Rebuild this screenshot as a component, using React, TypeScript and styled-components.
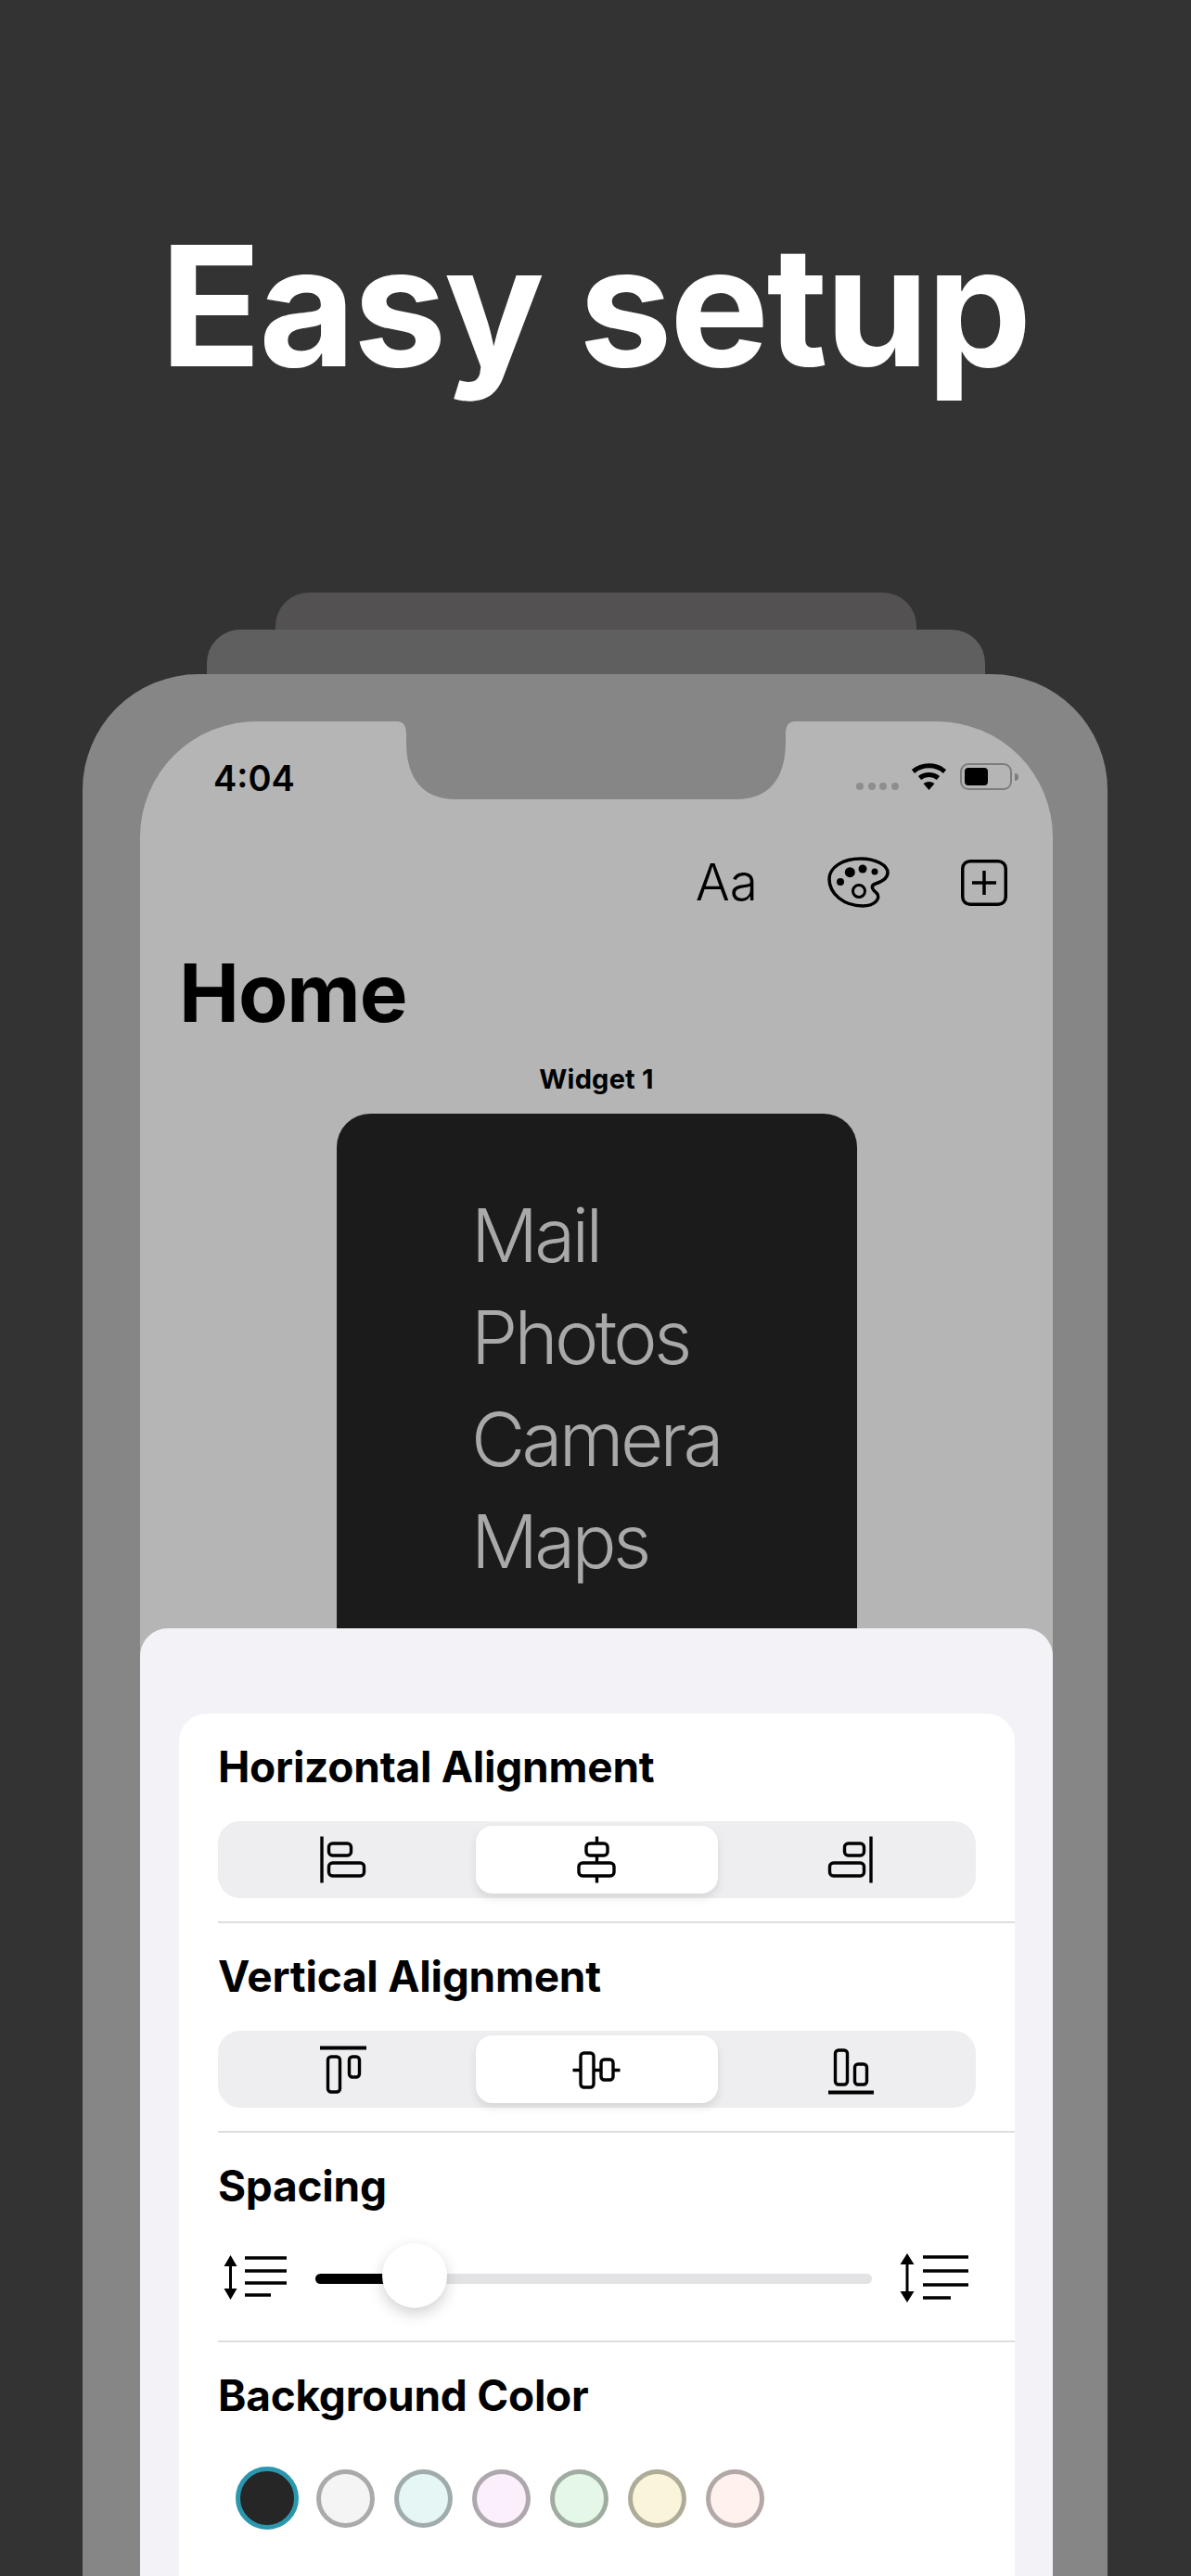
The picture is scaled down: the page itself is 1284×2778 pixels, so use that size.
import styled, { createGlobalStyle } from 'styled-components';

const GlobalStyle = createGlobalStyle`
  html, body {
    margin: 0;
    background: #333333;
  }
  * {
    box-sizing: border-box;
  }
`;

const hIcons = [
  <>
    <path d="M6 4.5V54.5" />
    <rect x="13.5" y="12" width="24" height="13" rx="4" />
    <rect x="13.5" y="33" width="38" height="14" rx="4" />
  </>,
  <>
    <path d="M30.5 4.5V12M30.5 25V33M30.5 47V54.5" />
    <rect x="19" y="12" width="23" height="13" rx="4" />
    <rect x="11" y="33" width="38" height="14" rx="4" />
  </>,
  <>
    <path d="M53 4.5V54.5" />
    <rect x="24.5" y="12" width="21" height="13" rx="4" />
    <rect x="8.5" y="33" width="37" height="14" rx="4" />
  </>,
];

const vIcons = [
  <>
    <path d="M4 6.5H54" strokeWidth="4" />
    <rect x="12.5" y="16" width="13" height="38" rx="3.5" />
    <rect x="35.5" y="16" width="11" height="22" rx="3.5" />
  </>,
  <>
    <path d="M4.5 30.5H13M27 30.5H35M48 30.5H55.5" />
    <rect x="13" y="12" width="14" height="37" rx="3.5" />
    <rect x="35" y="19" width="13" height="22" rx="3.5" />
  </>,
  <>
    <path d="M7 54.5H56" strokeWidth="4" />
    <rect x="14.5" y="9" width="13" height="37" rx="3.5" />
    <rect x="35.5" y="24" width="13" height="22" rx="3.5" />
  </>,
];

const swatches = ['#f4f4f4', '#e5f6f5', '#faeffa', '#e5f7e6', '#faf5da', '#fff1ed'];

function Segmented({ icons }: { icons: React.ReactNode[] }) {
  return (
    <SegmentBar>
      {icons.map((icon, i) => (
        <SegmentButton key={i} $active={i === 1}>
          <AlignIcon viewBox="0 0 60 60">{icon}</AlignIcon>
        </SegmentButton>
      ))}
    </SegmentBar>
  );
}

export default function App() {
  const spacing = 0.178;

  return (
    <Page>
      <GlobalStyle />
      <Hero>
        <Title>Easy setup</Title>
      </Hero>
      <Stack>
        <BackLayer $width={691} $height={40} $color="#535151" />
        <BackLayer $width={839} $height={48} $color="#5f5f5f" />
        <Phone>
          <Screen>
            <StatusBar>
              <Time>4:04</Time>
              <Notch viewBox="0 0 429 84">
                <path
                  d="M0 0C7 0 10 5 10 14V22C10 62 28 84 64 84H365C401 84 419 62 419 22V14C419 5 422 0 429 0Z"
                  fill="#868686"
                />
              </Notch>
              <StatusIcons>
                <SignalDots>
                  <i />
                  <i />
                  <i />
                  <i />
                </SignalDots>
                <WifiIcon viewBox="0 0 39 29">
                  <path d="M2.5 9C12 .8 27 .8 36.5 9M9.5 16C15 11.4 24 11.4 29.5 16" fill="none" stroke="#000" strokeWidth="5" />
                  <path d="M13.5 22Q19.5 18 25.5 22L19.5 29Z" fill="#000" />
                </WifiIcon>
                <Battery>
                  <BatteryLevel $level={0.55} />
                </Battery>
                <BatteryCap />
              </StatusIcons>
            </StatusBar>

            <Main>
              <Toolbar>
                <FontButton>Aa</FontButton>
                <PaletteIcon viewBox="0 0 67 55">
                  <path
                    d="M36 2C52 2 65 9 65 17C65 24 58 27 52 29C46 31 48 35 53 39C58 44 52 53 38 53C18 53 2 40 2 24C2 11 17 2 36 2Z"
                    fill="none"
                    stroke="#000"
                    strokeWidth="3.5"
                  />
                  <circle cx="24.3" cy="16.7" r="5.5" />
                  <circle cx="38" cy="13" r="4.5" />
                  <circle cx="51" cy="16" r="3.5" />
                  <circle cx="14" cy="27" r="4" />
                  <circle cx="34" cy="37" r="6.5" fill="none" stroke="#000" strokeWidth="3" />
                </PaletteIcon>
                <svg width="50" height="50" viewBox="0 0 50 50">
                  <rect x="1.75" y="1.75" width="46.5" height="46.5" rx="8" fill="none" stroke="#000" strokeWidth="3.5" />
                  <path d="M25 12V38M12 25H38" stroke="#000" strokeWidth="3.5" />
                </svg>
              </Toolbar>
              <PageTitle>Home</PageTitle>
              <WidgetLabel>Widget 1</WidgetLabel>
              <Widget>
                <WidgetRow>Mail</WidgetRow>
                <WidgetRow>Photos</WidgetRow>
                <WidgetRow>Camera</WidgetRow>
                <WidgetRow>Maps</WidgetRow>
              </Widget>
            </Main>

            <Sheet>
              <Card>
                <Section>
                  <Heading>Horizontal Alignment</Heading>
                  <Segmented icons={hIcons} />
                </Section>
                <Section>
                  <Heading>Vertical Alignment</Heading>
                  <Segmented icons={vIcons} />
                </Section>
                <Section>
                  <Heading>Spacing</Heading>
                  <SliderRow>
                    <svg width="69" height="50" viewBox="0 0 69 50">
                      <path d="M7.5 8V42" stroke="#000" strokeWidth="3" />
                      <path d="M.5 13L7.5 1L14.5 13ZM.5 37L7.5 49L14.5 37Z" />
                      <path d="M23 4H68M23 18H68M23 31H68M23 44H51" stroke="#000" strokeWidth="3.5" />
                    </svg>
                    <Track>
                      <TrackFill $value={spacing} />
                      <Thumb $value={spacing} />
                    </Track>
                    <svg width="76" height="57" viewBox="0 0 76 57">
                      <path d="M8 9V48" stroke="#000" strokeWidth="3" />
                      <path d="M.5 14L8 2L15.5 14ZM.5 43L8 55L15.5 43Z" />
                      <path d="M25 6H74M25 21H74M25 36H74M25 50H55" stroke="#000" strokeWidth="3.5" />
                    </svg>
                  </SliderRow>
                </Section>
                <LastSection>
                  <Heading>Background Color</Heading>
                  <Swatches>
                    <Cell>
                      <SelectedSwatch />
                    </Cell>
                    {swatches.map((color) => (
                      <Cell key={color}>
                        <Swatch $color={color} />
                      </Cell>
                    ))}
                  </Swatches>
                </LastSection>
              </Card>
            </Sheet>
          </Screen>
        </Phone>
      </Stack>
    </Page>
  );
}

const Page = styled.div`
  width: 1284px;
  height: 2778px;
  overflow: hidden;
  background: #333333;
  font-family: Inter, 'Liberation Sans', sans-serif;
  color: #000;
`;

const Hero = styled.div`
  height: 639px;
  display: flex;
  justify-content: center;
  padding: 215px 2px 0 0;
`;

const Title = styled.h1`
  margin: 0;
  font-size: 180px;
  line-height: 230px;
  font-weight: 700;
  letter-spacing: -2.8px;
  color: #fff;
`;

const Stack = styled.div`
  display: flex;
  flex-direction: column;
  align-items: center;
  padding-right: 1px;
`;

const BackLayer = styled.div<{ $width: number; $height: number; $color: string }>`
  width: ${(p) => p.$width}px;
  height: ${(p) => p.$height}px;
  margin-left: 2px;
  background: ${(p) => p.$color};
  border-radius: 36px 36px 0 0;
`;

const Phone = styled.div`
  width: 1105px;
  height: 2051px;
  padding: 51px 59px 0 62px;
  background: #868686;
  border-radius: 125px 125px 0 0;
`;

const Screen = styled.div`
  width: 984px;
  height: 2000px;
  background: #b5b5b5;
  border-radius: 125px 125px 0 0;
  overflow: hidden;
`;

const StatusBar = styled.div`
  display: grid;
  grid-template-columns: 277px 429px 278px;
  height: 84px;
`;

const Time = styled.div`
  padding: 41px 0 0 79px;
  font-size: 38px;
  line-height: 40px;
  font-weight: 600;
`;

const Notch = styled.svg`
  display: block;
  width: 429px;
  height: 84px;
`;

const StatusIcons = styled.div`
  display: flex;
  align-items: flex-start;
  padding: 45px 0 0 66px;
`;

const SignalDots = styled.div`
  display: flex;
  gap: 4.5px;
  margin-top: 21px;
  i {
    display: block;
    width: 8px;
    height: 8px;
    border-radius: 50%;
    background: #8e8e8e;
  }
`;

const WifiIcon = styled.svg`
  width: 39px;
  height: 29px;
  margin-left: 13px;
  flex: none;
`;

const Battery = styled.div`
  width: 56px;
  height: 29px;
  margin-left: 14px;
  padding: 3px;
  flex: none;
  border: 2.5px solid #7d7d7d;
  border-radius: 9px;
`;

const BatteryLevel = styled.div<{ $level: number }>`
  width: ${(p) => p.$level * 100}%;
  height: 100%;
  background: #000;
  border-radius: 4px;
`;

const BatteryCap = styled.div`
  width: 4px;
  height: 8px;
  margin: 11px 0 0 3px;
  flex: none;
  background: #7d7d7d;
  border-radius: 0 4px 4px 0;
`;

const Main = styled.div`
  height: 894px;
  padding-top: 62px;
`;

const Toolbar = styled.div`
  display: flex;
  justify-content: flex-end;
  align-items: center;
  gap: 75px;
  height: 55px;
  padding-right: 49px;
`;

const FontButton = styled.div`
  font-size: 55px;
  line-height: 55px;
  font-weight: 300;
`;

const PaletteIcon = styled.svg`
  width: 67px;
  height: 55px;
  margin-right: 2px;
`;

const PageTitle = styled.h2`
  margin: 42px 0 0;
  padding-left: 42px;
  font-size: 87px;
  line-height: 100px;
  font-weight: 700;
  letter-spacing: -1px;
`;

const WidgetLabel = styled.div`
  margin-top: 23px;
  font-size: 29px;
  line-height: 40px;
  font-weight: 700;
  text-align: center;
  letter-spacing: 0.2px;
`;

const Widget = styled.div`
  width: 561px;
  height: 600px;
  margin: 17px 0 0 212px;
  padding: 76px 0 0 145px;
  background: #1b1b1b;
  border-radius: 36px;
`;

const WidgetRow = styled.div`
  font-size: 80px;
  line-height: 110px;
  font-weight: 300;
  color: #a9a9a9;
  letter-spacing: -3.7px;
`;

const Sheet = styled.div`
  position: relative;
  height: 1022px;
  padding: 92px 41px 0 42px;
  background: #f2f2f7;
  border-radius: 30px 30px 0 0;
`;

const Card = styled.div`
  height: 1000px;
  background: #fff;
  border-radius: 30px;
`;

const Section = styled.section`
  height: 226px;
  margin-left: 42px;
  padding: 32px 42px 0 0;
  border-bottom: 2px solid #dedee0;
`;

const LastSection = styled(Section)`
  border-bottom: none;
`;

const Heading = styled.h3`
  margin: 0 0 34px;
  font-size: 46px;
  line-height: 50px;
  font-weight: 700;
  letter-spacing: -0.25px;
`;

const SegmentBar = styled.div`
  display: grid;
  grid-template-columns: repeat(3, 1fr);
  gap: 12px;
  height: 83px;
  padding: 5px 6px;
  background: #eeeef0;
  border-radius: 24px;
`;

const SegmentButton = styled.div<{ $active: boolean }>`
  display: flex;
  align-items: center;
  justify-content: center;
  height: 73px;
  border-radius: 18px;
  background: ${(p) => (p.$active ? '#fff' : 'transparent')};
  box-shadow: ${(p) => (p.$active ? '0 5px 10px rgba(0, 0, 0, 0.1)' : 'none')};
`;

const AlignIcon = styled.svg`
  width: 60px;
  height: 60px;
  fill: none;
  stroke: #000;
  stroke-width: 3.4;
`;

const SliderRow = styled.div`
  display: flex;
  align-items: center;
  gap: 30px;
  height: 70px;
  margin-top: 39px;
  padding: 0 6px;
`;

const Track = styled.div`
  position: relative;
  flex: 1;
  height: 11px;
  margin-top: 3px;
  background: #e3e3e5;
  border-radius: 6px;
`;

const TrackFill = styled.div<{ $value: number }>`
  width: ${(p) => p.$value * 100}%;
  height: 100%;
  background: #000;
  border-radius: 6px 0 0 6px;
`;

const Thumb = styled.div<{ $value: number }>`
  position: absolute;
  top: -33px;
  left: ${(p) => p.$value * 100}%;
  width: 70px;
  height: 70px;
  margin-left: -35px;
  background: #fff;
  border-radius: 50%;
  box-shadow: 0 6px 16px rgba(0, 0, 0, 0.18);
`;

const Swatches = styled.div`
  display: flex;
  height: 68px;
  margin-top: 52px;
  padding-left: 11px;
`;

const Cell = styled.div`
  display: flex;
  align-items: center;
  justify-content: center;
  width: 84px;
`;

const Swatch = styled.div<{ $color: string }>`
  width: 63px;
  height: 63px;
  background: ${(p) => p.$color};
  border: 5px solid rgba(0, 0, 0, 0.3);
  border-radius: 50%;
`;

const SelectedSwatch = styled.div`
  width: 68px;
  height: 68px;
  background: #262626;
  border: 5px solid #2a97ae;
  border-radius: 50%;
`;
